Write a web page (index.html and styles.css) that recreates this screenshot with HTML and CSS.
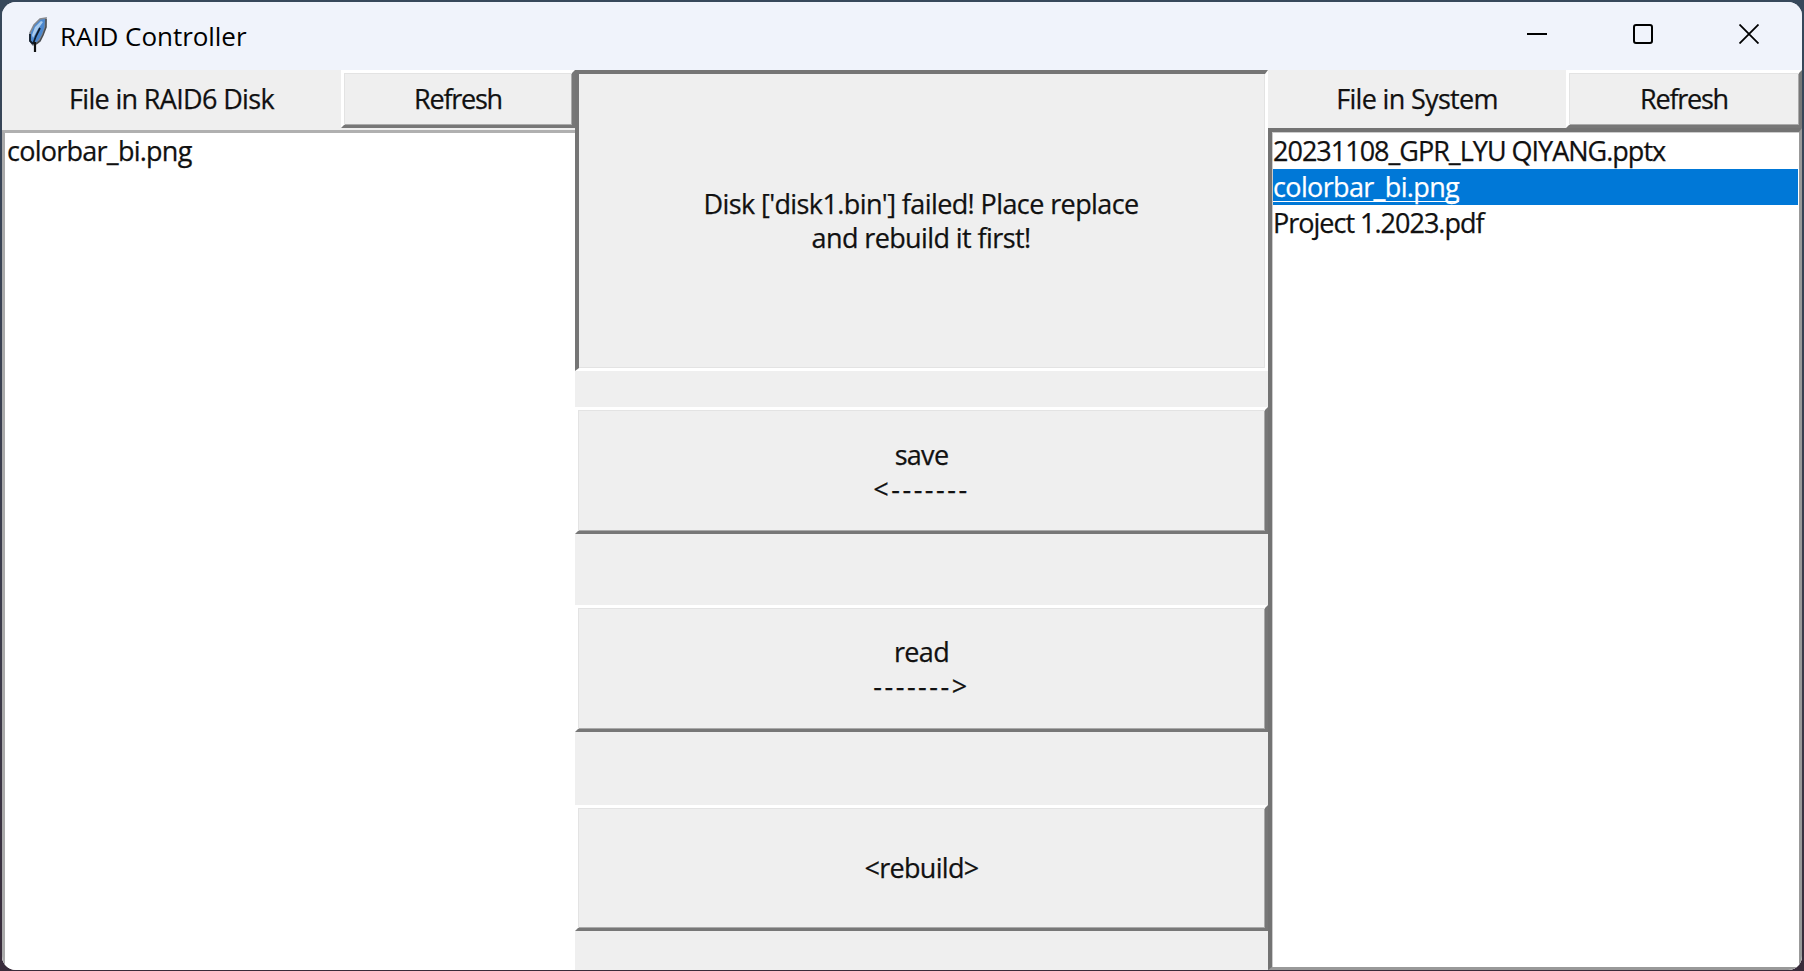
FILE: index.html
```html
<!DOCTYPE html>
<html lang="en">
<head>
<meta charset="utf-8">
<title>RAID Controller</title>
<link rel="stylesheet" href="styles.css">
</head>
<body>
<div class="window">
  <header class="titlebar">
    <svg class="feather" width="22" height="38" viewBox="0 0 22 38">
      <path d="M20 2 14 3 8 9 4 17 4 25l3 4 5-3 4-6 3-8z" fill="#4c88cf" stroke="#85888e" stroke-width="1.600"/>
      <path d="M15 5 9 11 6 19l1 3 5-9 5-7z" fill="#a9cbed"/>
      <path d="M20 3v8l-3 8-3 6-4 3" fill="none" stroke="#4a4e54" stroke-width="1.600"/>
      <path d="M14 12 10 20l-3 8M4 18v7l3 3" fill="none" stroke="#111d2c" stroke-width="1.800"/>
      <path d="M9 26v10" stroke="#111" stroke-width="2.200"/>
    </svg>
    <h1 class="title">RAID Controller</h1>
    <div class="controls">
      <svg width="20" height="20" viewBox="0 0 20 20"><path d="M0 10h20" stroke="#000" stroke-width="2"/></svg>
      <svg width="20" height="20" viewBox="0 0 20 20"><rect x="1" y="1" width="18" height="18" rx="2" fill="none" stroke="#000" stroke-width="2"/></svg>
      <svg width="20" height="20" viewBox="0 0 20 20"><path d="M.5.500l19 19M19.500.500l-19 19" stroke="#000" stroke-width="1.800"/></svg>
    </div>
  </header>
  <main class="content">
    <section class="pane disk">
      <div class="head"><div class="label"><span>File in RAID6 Disk</span></div><button class="btn refresh">Refresh</button></div>
      <ul class="list"><li>colorbar_bi.png</li></ul>
    </section>
    <section class="actions">
      <div class="message">Disk ['disk1.bin'] failed! Place replace<br>and rebuild it first!</div>
      <button class="btn save">save<br><span class="dash">&lt;-------</span></button>
      <button class="btn read">read<br><span class="dash">-------&gt;</span></button>
      <button class="btn rebuild">&lt;rebuild&gt;</button>
    </section>
    <section class="pane system">
      <div class="head"><div class="label"><span>File in System</span></div><button class="btn refresh">Refresh</button></div>
      <ul class="list"><li>20231108_GPR_LYU QIYANG.pptx</li><li class="selected">colorbar_bi.png</li><li>Project 1.2023.pdf</li></ul>
    </section>
  </main>
</div>
</body>
</html>
```
FILE: styles.css
```css
* { box-sizing: border-box; }
body {
  margin: 0;
  width: 1804px;
  height: 971px;
  padding: 2px 2px 1px;
  overflow: hidden;
  background: linear-gradient(#37485b, #3b3948 70%, #382b3a);
  font-family: "Open Sans", "Noto Sans", sans-serif;
  font-size: 27px;
  line-height: 34px;
  color: #111;
}
.window {
  height: 968px;
  display: flex;
  flex-direction: column;
  border-radius: 14px;
  overflow: hidden;
  background: #efefef;
}
.titlebar {
  height: 68px;
  flex: none;
  display: flex;
  align-items: flex-start;
  padding: 14px 43px 0 24px;
  background: #f0f3fb;
}
.title {
  margin: 3px 0 0 12px;
  font-size: 26px;
  line-height: 34px;
  font-weight: 400;
  letter-spacing: -0.050px;
  color: #000;
}
.controls {
  margin: 8px 0 0 auto;
  display: flex;
  gap: 86px;
}
.content {
  flex: 1;
  display: grid;
  grid-template-columns: 573px 693px 534px;
  -webkit-text-stroke: 0.250px;
}
.pane {
  display: flex;
  flex-direction: column;
}
.head {
  display: flex;
  height: 58px;
  flex: none;
}
.label {
  flex: 1;
  display: flex;
  align-items: center;
  justify-content: center;
  letter-spacing: -0.670px;
}
.btn {
  font: inherit;
  color: inherit;
  letter-spacing: -0.700px;
  width: 234px;
  padding: 0;
  background: #efefef;
  border: 3px solid;
  border-color: #fff #777 #777 #fff;
  box-shadow: inset 1px 1px #e3e3e3, inset -1px -1px #aaa;
}
.refresh { letter-spacing: -1.250px; }
.list {
  flex: 1;
  margin: 0;
  padding: 0;
  list-style: none;
  background: #fff;
  letter-spacing: -0.750px;
}
.list li {
  height: 36px;
  line-height: 36px;
  white-space: nowrap;
}
.disk .list {
  margin-top: 2px;
  border-top: 3px solid #b0b0b0;
  border-left: 3px solid #aaa;
  padding: 0 0 0 2px;
}
.system .list {
  border: 4px solid #737373;
  border-right: 3px solid #999;
  border-bottom: 3px solid #999;
  box-shadow: inset 1px 1px #ccc;
  padding: 1px 1px 0 1px;
  letter-spacing: -1px;
}
.system .btn { width: 236px; }
.list .selected {
  color: #fff;
  background: #0078d7;
  letter-spacing: -0.650px;
  text-decoration: underline;
  text-decoration-thickness: 1px;
  text-underline-offset: 4px;
  text-decoration-skip-ink: none;
}
.actions {
  display: flex;
  flex-direction: column;
}
.actions .btn {
  width: 100%;
  height: 126px;
}
.message {
  height: 301px;
  display: flex;
  align-items: center;
  justify-content: center;
  text-align: center;
  letter-spacing: -0.600px;
  padding: 0 2px 1px 0;
  border: 4px solid;
  border-color: #757575 #fff #fff #757575;
  border-right-width: 3px;
  border-bottom-width: 3px;
  box-shadow: inset -1px -1px #e3e3e3;
}
.dash { letter-spacing: 2.500px; }
.actions .save {
  margin-top: 36px;
  height: 127px;
  padding-top: 2px;
}
.actions .read {
  margin-top: 71px;
  height: 127px;
}
.rebuild { margin-top: 73px; }
```
